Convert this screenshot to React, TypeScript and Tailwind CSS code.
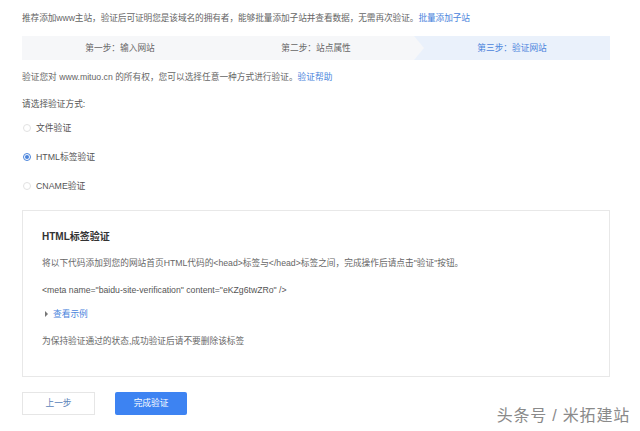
import React from 'react';

const STEPS = ['第一步：输入网站', '第二步：站点属性', '第三步：验证网站'];

const METHODS = [
  { key: 'file', label: '文件验证' },
  { key: 'html', label: 'HTML标签验证' },
  { key: 'cname', label: 'CNAME验证' },
];

function Radio({ checked, label }: { checked: boolean; label: string }) {
  return (
    <div className="flex h-[12px] items-center gap-[5px] leading-[12px]">
      <span
        className={
          checked
            ? 'flex h-[8px] w-[8px] items-center justify-center rounded-full border border-[#4a84dc] bg-white'
            : 'h-[8px] w-[8px] rounded-full border border-[#e2e2e2] bg-white'
        }
      >
        {checked && <span className="h-[4px] w-[4px] rounded-full bg-[#4a84dc]" />}
      </span>
      <span className="text-[8.8px] text-[#555]">{label}</span>
    </div>
  );
}

export default function App() {
  const active = 2;
  const method = 'html';

  return (
    <div
      className="relative h-[431px] w-[640px] overflow-hidden bg-white pl-[22px] pt-[12px] text-[#666]"
      style={{ fontFamily: '"Liberation Sans", "Noto Sans CJK SC", sans-serif' }}
    >
      <p className="h-[12px] text-[8.7px] leading-[12px] tracking-[-0.1px]">
        推荐添加www主站，验证后可证明您是该域名的拥有者，能够批量添加子站并查看数据，无需再次验证。
        <span className="text-[#4a84dc]">批量添加子站</span>
      </p>

      {/* step bar */}
      <div className="mt-[12px] flex h-[24px] w-[588px] text-[8.7px] leading-[24px]">
        {STEPS.map((s, i) => (
          <div
            key={s}
            className={
              i === active
                ? 'relative flex-1 bg-[#eaf1fb] text-center text-[#4a84dc]'
                : 'flex-1 bg-[#f6f7f9] text-center text-[#666]'
            }
          >
            {i === active && (
              <span className="absolute left-0 top-0 h-0 w-0 border-y-[12px] border-l-[10px] border-y-transparent border-l-[#f6f7f9]" />
            )}
            {s}
          </div>
        ))}
      </div>

      <p className="mt-[11px] h-[12px] text-[8.7px] leading-[12px]">
        验证您对 www.mituo.cn 的所有权，您可以选择任意一种方式进行验证。
        <span className="text-[#4a84dc]">验证帮助</span>
      </p>

      <p className="mt-[15px] h-[12px] text-[8.7px] leading-[12px] text-[#555]">请选择验证方式:</p>

      <div className="mt-[12px] flex flex-col gap-[17px] pl-[1px]">
        {METHODS.map((m) => (
          <Radio key={m.key} checked={m.key === method} label={m.label} />
        ))}
      </div>

      {/* verification panel */}
      <div className="mt-[18px] h-[167px] w-[588px] border border-[#e8e8e8] bg-white pl-[19px] pt-[19px] text-[8.7px] text-[#666]">
        <h3 className="h-[14px] text-[10px] font-bold leading-[14px] text-[#333]">HTML标签验证</h3>
        <p className="mt-[13px] h-[12px] leading-[12px]">
          将以下代码添加到您的网站首页HTML代码的&lt;head&gt;标签与&lt;/head&gt;标签之间，完成操作后请点击"验证"按钮。
        </p>
        <p className="mt-[15px] h-[12px] leading-[12px] text-[#555]">
          &lt;meta name="baidu-site-verification" content="eKZg6twZRo" /&gt;
        </p>
        <div className="mt-[12px] flex h-[12px] items-center gap-[5px] pl-[3px] leading-[12px]">
          <span className="h-0 w-0 border-y-[3px] border-l-[3px] border-y-transparent border-l-[#777]" />
          <span className="text-[#4a84dc]">查看示例</span>
        </div>
        <p className="mt-[15px] h-[12px] leading-[12px]">为保持验证通过的状态,成功验证后请不要删除该标签</p>
      </div>

      {/* actions */}
      <div className="mt-[15px] flex gap-[20px]">
        <button className="h-[23px] w-[73px] border border-[#e6e6e6] bg-white text-[8.7px] text-[#5a7fb8]">
          上一步
        </button>
        <button className="h-[23px] w-[72px] rounded-[2px] bg-[#3d83f2] text-[8.7px] text-white">
          完成验证
        </button>
      </div>

      {/* watermark */}
      <div className="absolute right-[10px] top-[406px] text-[16px] leading-[20px] tracking-[0.8px] text-[#8a8a8a] [text-shadow:0_0_2px_#fff]">
        头条号 / 米拓建站
      </div>
    </div>
  );
}
